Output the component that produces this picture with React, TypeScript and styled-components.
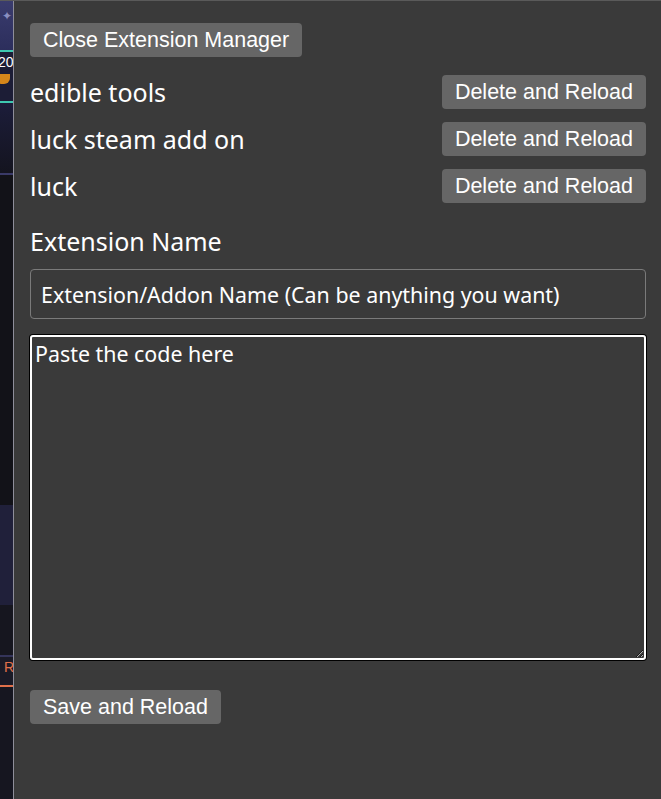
import styled, { createGlobalStyle } from "styled-components";

const GlobalStyle = createGlobalStyle`
  html, body {
    margin: 0;
    padding: 0;
    background: #3a3a3a;
  }
`;

const Screen = styled.div`
  display: flex;
  width: 661px;
  height: 799px;
  overflow: hidden;
  border-top: 1px solid #5a5a5a;
  box-sizing: border-box;
`;

const GameStrip = styled.div`
  width: 13px;
  flex-shrink: 0;
  display: flex;
  flex-direction: column;
  border-right: 1px solid #8e8e9a;
  overflow: hidden;
  font-family: "Liberation Sans", Arial, sans-serif;
`;

const StripBlock = styled.div<{ $h: number; $bg: string; $line?: string }>`
  height: ${(p) => p.$h}px;
  flex-shrink: 0;
  background: ${(p) => p.$bg};
  border-bottom: ${(p) => (p.$line ? `2px solid ${p.$line}` : "none")};
  position: relative;
  overflow: hidden;
`;

const Sparkle = styled.span`
  position: absolute;
  top: 8px;
  left: 2px;
  color: #8a8fc0;
  font-size: 12px;
`;

const StripText = styled.span<{ $color: string; $left: number }>`
  position: absolute;
  top: 2px;
  left: ${(p) => p.$left}px;
  color: ${(p) => p.$color};
  font-size: 14px;
`;

const Basket = styled.div`
  position: absolute;
  top: 22px;
  left: -4px;
  width: 14px;
  height: 10px;
  background: #d5861a;
  border-radius: 0 0 6px 6px;
`;

const Panel = styled.div`
  flex: 1;
  background: #3a3a3a;
  padding: 22px 15px 0 16px;
  display: flex;
  flex-direction: column;
  align-items: flex-start;
  color: #ffffff;
`;

const Button = styled.button`
  height: 34px;
  padding: 0 13px;
  border: none;
  border-radius: 4px;
  background: #666666;
  color: #ffffff;
  font-family: "Liberation Sans", Arial, sans-serif;
  font-size: 21.5px;
  cursor: pointer;
  flex-shrink: 0;
`;

const CloseButton = styled(Button)`
  margin-bottom: 18px;
`;

const ExtensionList = styled.div`
  width: 100%;
  display: flex;
  flex-direction: column;
  gap: 13px;
`;

const ExtensionRow = styled.div`
  display: flex;
  justify-content: space-between;
  align-items: center;
  width: 100%;
`;

const ExtensionName = styled.span`
  font-family: "Noto Sans", "Open Sans", sans-serif;
  font-size: 25px;
  line-height: 32px;
`;

const Label = styled.label`
  margin-top: 22px;
  line-height: 32px;
  font-family: "Noto Sans", "Open Sans", sans-serif;
  font-size: 25px;
`;

const NameInput = styled.input`
  margin-top: 12px;
  width: 100%;
  height: 50px;
  box-sizing: border-box;
  padding: 0 10px;
  background: #3a3a3a;
  border: 1px solid #7a7a7a;
  border-radius: 4px;
  color: #ffffff;
  font-family: "Noto Sans", "Open Sans", sans-serif;
  font-size: 21.4px;
  outline: none;

  &::placeholder {
    color: #ffffff;
    opacity: 1;
  }
`;

const CodeArea = styled.textarea`
  margin-top: 16px;
  width: 100%;
  height: 325px;
  box-sizing: border-box;
  padding: 2px 3px;
  background: #3a3a3a;
  border: 2px solid #ffffff;
  border-radius: 3px;
  box-shadow: 0 0 0 1px #000000;
  color: #ffffff;
  font-family: "Noto Sans", "Open Sans", sans-serif;
  font-size: 21.4px;
  outline: none;

  &::placeholder {
    color: #ffffff;
    opacity: 1;
  }
`;

const SaveButton = styled(Button)`
  margin-top: 30px;
`;

const extensions = ["edible tools", "luck steam add on", "luck"];

const App = () => {
  return (
    <>
      <GlobalStyle />
      <Screen>
        <GameStrip>
          <StripBlock $h={49} $bg="linear-gradient(#3a3c6e, #2c2e5c)" $line="#3ec8b0">
            <Sparkle>✦</Sparkle>
          </StripBlock>
          <StripBlock $h={49} $bg="#1c1d36" $line="#3ec8b0">
            <StripText $color="#ffffff" $left={-2}>20</StripText>
            <Basket />
          </StripBlock>
          <StripBlock $h={70} $bg="linear-gradient(#1c1d3a, #14141f)" $line="#3a3a68" />
          <StripBlock $h={330} $bg="#121218" />
          <StripBlock $h={100} $bg="#20203a" />
          <StripBlock $h={50} $bg="#16161f" $line="#34345a" />
          <StripBlock $h={28} $bg="#1a1a26" $line="#e0704a">
            <StripText $color="#e0704a" $left={4}>R</StripText>
          </StripBlock>
          <StripBlock $h={120} $bg="#161620" />
        </GameStrip>
        <Panel>
          <CloseButton>Close Extension Manager</CloseButton>
          <ExtensionList>
            {extensions.map((name) => (
              <ExtensionRow key={name}>
                <ExtensionName>{name}</ExtensionName>
                <Button>Delete and Reload</Button>
              </ExtensionRow>
            ))}
          </ExtensionList>
          <Label>Extension Name</Label>
          <NameInput placeholder="Extension/Addon Name (Can be anything you want)" />
          <CodeArea placeholder="Paste the code here" />
          <SaveButton>Save and Reload</SaveButton>
        </Panel>
      </Screen>
    </>
  );
};

export default App;
